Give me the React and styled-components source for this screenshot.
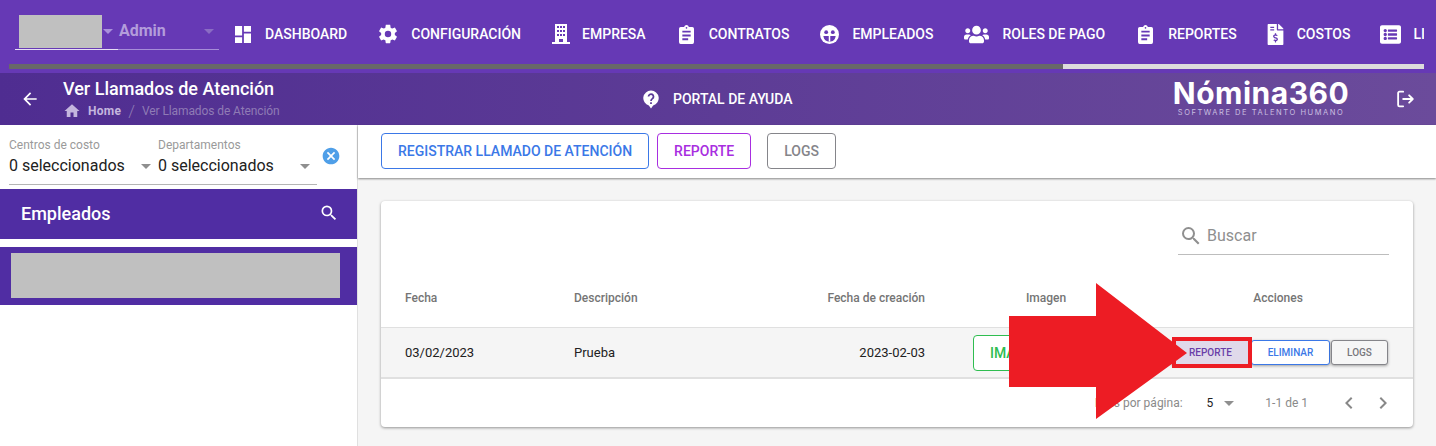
import React from "react";
import styled, { createGlobalStyle } from "styled-components";
import {
  MdArrowBack,
  MdHome,
  MdSearch,
  MdCancel,
  MdChevronLeft,
  MdChevronRight,
} from "react-icons/md";
import { FaUsers, FaFileInvoiceDollar, FaListAlt } from "react-icons/fa";

const DashboardIcon = () => (
  <svg viewBox="3 3 18 18" width="16" height="17" preserveAspectRatio="none" fill="#fff">
    <path d="M13 3V9H21V3M13 21H21V11H13M3 21H11V15H3M3 13H11V3H3V13Z" />
  </svg>
);

const CogIcon = () => (
  <svg viewBox="0 0 24 24" width="22" height="22" fill="#fff">
    <path d="M12 15.5A3.5 3.5 0 1 1 12 8.5A3.5 3.5 0 0 1 12 15.5M19.43 12.97C19.47 12.65 19.5 12.33 19.5 12C19.5 11.67 19.47 11.34 19.43 11L21.54 9.37C21.73 9.22 21.78 8.95 21.66 8.73L19.66 5.27C19.54 5.05 19.27 4.96 19.05 5.05L16.56 6.05C16.04 5.66 15.5 5.32 14.87 5.07L14.5 2.42C14.46 2.18 14.25 2 14 2H10C9.75 2 9.54 2.18 9.5 2.42L9.13 5.07C8.5 5.32 7.96 5.66 7.44 6.05L4.95 5.05C4.73 4.96 4.46 5.05 4.34 5.27L2.34 8.73C2.21 8.95 2.27 9.22 2.46 9.37L4.57 11C4.53 11.34 4.5 11.67 4.5 12C4.5 12.33 4.53 12.65 4.57 12.97L2.46 14.63C2.27 14.78 2.21 15.05 2.34 15.27L4.34 18.73C4.46 18.95 4.73 19.03 4.95 18.95L7.44 17.94C7.96 18.34 8.5 18.68 9.13 18.93L9.5 21.58C9.54 21.82 9.75 22 10 22H14C14.25 22 14.46 21.82 14.5 21.58L14.87 18.93C15.5 18.67 16.04 18.34 16.56 17.94L19.05 18.95C19.27 19.03 19.54 18.95 19.66 18.73L21.66 15.27C21.78 15.05 21.73 14.78 21.54 14.63L19.43 12.97Z" />
  </svg>
);

const BuildingIcon = () => (
  <svg viewBox="0 0 18 20" width="18" height="20" fill="#fff">
    <path
      fillRule="evenodd"
      d="M3 0H15V18H11V15H7V18H3ZM5 2V4H7V2ZM8 2V4H10V2ZM11 2V4H13V2ZM5 6V8H7V6ZM8 6V8H10V6ZM11 6V8H13V6ZM5 10V12H7V10ZM8 10V12H10V10ZM11 10V12H13V10Z"
    />
    <path d="M0 18H18V20H0Z" />
  </svg>
);

const ClipboardIcon = () => (
  <svg viewBox="3 1 18 20" width="15" height="19" preserveAspectRatio="none" fill="#fff">
    <path d="M17 9H7V7H17M17 13H7V11H17M14 17H7V15H14M12 3A1 1 0 0 1 13 4A1 1 0 0 1 12 5A1 1 0 0 1 11 4A1 1 0 0 1 12 3M19 3H14.82C14.4 1.84 13.3 1 12 1C10.7 1 9.6 1.84 9.18 3H5A2 2 0 0 0 3 5V19A2 2 0 0 0 5 21H19A2 2 0 0 0 21 19V5A2 2 0 0 0 19 3Z" />
  </svg>
);

const FaceIcon = () => (
  <svg viewBox="0 0 20 20" width="19" height="19">
    <circle cx="10" cy="10" r="10" fill="#fff" />
    <circle cx="6.5" cy="7.5" r="2" fill="#6639b5" />
    <circle cx="13.5" cy="7.5" r="2" fill="#6639b5" />
    <path d="M3.5 11.5H16.5C16 15.5 13.5 17.5 10 17.5S4 15.5 3.5 11.5Z" fill="#6639b5" />
    <path d="M9.2 11.5H10.8V17.5H9.2Z" fill="#fff" />
  </svg>
);

const HelpBubbleIcon = () => (
  <svg viewBox="0 0 18 20" width="16" height="19">
    <path d="M9 0A8.5 8.5 0 0 0 6.6 16.7L9 20L11.4 16.7A8.5 8.5 0 0 0 9 0Z" fill="#fff" />
    <path
      d="M6.2 6.6A2.8 2.8 0 1 1 10.6 9C9.6 9.7 9 10.3 9 11.6"
      fill="none"
      stroke="#5a3a97"
      strokeWidth="2"
    />
    <path d="M8 13H10V15H8Z" fill="#5a3a97" />
  </svg>
);

const navItems = [
  { label: "Dashboard", icon: <DashboardIcon />, width: 16 },
  { label: "Configuración", icon: <CogIcon />, width: 18 },
  { label: "Empresa", icon: <BuildingIcon />, width: 15 },
  { label: "Contratos", icon: <ClipboardIcon />, width: 17 },
  { label: "Empleados", icon: <FaceIcon />, width: 17 },
  { label: "Roles de pago", icon: <FaUsers size={25} />, width: 23 },
  { label: "Reportes", icon: <ClipboardIcon />, width: 17 },
  { label: "Costos", icon: <FaFileInvoiceDollar size={21} />, width: 14 },
  { label: "Listas", icon: <FaListAlt size={21} />, width: 17 },
];

export default function App() {
  return (
    <Page>
      <GlobalStyle />
      <TopBar>
        <TopRow>
          <RoleSelect>
            <RoleValue>
              <Redacted />
              <Caret $color="#a98fdc" />
              <RoleName>Admin</RoleName>
              <Caret $color="#8a6cc4" $push />
            </RoleValue>
            <RoleLine />
          </RoleSelect>
          <Nav>
            {navItems.map((item) => (
              <NavItem key={item.label}>
                <NavIcon $width={item.width}>{item.icon}</NavIcon>
                {item.label}
              </NavItem>
            ))}
          </Nav>
        </TopRow>
        <ScrollTrack>
          <ScrollThumb />
        </ScrollTrack>
      </TopBar>

      <SubHeader>
        <BackIcon>
          <MdArrowBack size={20} />
        </BackIcon>
        <TitleBlock>
          <Title>Ver Llamados de Atención</Title>
          <Crumbs>
            <MdHome size={18} />
            <CrumbHome>Home</CrumbHome>
            <CrumbSep>/</CrumbSep>
            <span>Ver Llamados de Atención</span>
          </Crumbs>
        </TitleBlock>
        <HelpLink>
          <HelpBubbleIcon />
          Portal de ayuda
        </HelpLink>
        <Logo>
          <LogoName>Nómina360</LogoName>
          <LogoTag>Software de talento humano</LogoTag>
        </Logo>
        <LogoutIcon viewBox="0 0 24 24" width="22" height="22">
          <path
            d="M10 4H6a1.5 1.5 0 0 0-1.5 1.5v13A1.5 1.5 0 0 0 6 20h4M10 12h10M16.5 8l4 4-4 4"
            fill="none"
            stroke="#fff"
            strokeWidth="2"
            strokeLinecap="round"
            strokeLinejoin="round"
          />
        </LogoutIcon>
      </SubHeader>

      <Body>
        <Sidebar>
          <Filters>
            <FilterGroup>
              <Filter $width={149}>
                <FilterLabel>Centros de costo</FilterLabel>
                <FilterValue>
                  0 seleccionados
                  <Caret $color="#8f8f8f" $push />
                </FilterValue>
              </Filter>
              <Filter $width={159}>
                <FilterLabel>Departamentos</FilterLabel>
                <FilterValue>
                  0 seleccionados
                  <Caret $color="#8f8f8f" $push />
                </FilterValue>
              </Filter>
            </FilterGroup>
            <ClearIcon>
              <MdCancel size={20} />
            </ClearIcon>
          </Filters>
          <SideHead>
            Empleados
            <MdSearch size={20} />
          </SideHead>
          <SideItem>
            <SideRedacted />
          </SideItem>
        </Sidebar>

        <Main>
          <Toolbar>
            <OutlineButton $color="#3b78e7">Registrar llamado de atención</OutlineButton>
            <OutlineButton $color="#a82ee0">Reporte</OutlineButton>
            <OutlineButton $color="#85858a" $gap>
              Logs
            </OutlineButton>
          </Toolbar>
          <Content>
            <Card>
              <SearchRow>
                <SearchField>
                  <MdSearch size={24} />
                  Buscar
                </SearchField>
              </SearchRow>
              <HeadRow>
                <span>Fecha</span>
                <span>Descripción</span>
                <RightCell>Fecha de creación</RightCell>
                <CenterCell>Imagen</CenterCell>
                <CenterCell>Acciones</CenterCell>
              </HeadRow>
              <DataRow>
                <span>03/02/2023</span>
                <span>Prueba</span>
                <RightCell>2023-02-03</RightCell>
                <CenterCell>
                  <ImageButton>Imagen</ImageButton>
                </CenterCell>
                <Actions>
                  <ActionButton $color="#6a3ea8" $bg="#e0d9ea" $border="#e0d9ea">
                    Reporte
                  </ActionButton>
                  <ActionButton $color="#3b78e7" $bg="#fff" $border="#3b78e7">
                    Eliminar
                  </ActionButton>
                  <ActionButton $color="#77777c" $bg="#f6f6f6" $border="#85858a" $narrow>
                    Logs
                  </ActionButton>
                </Actions>
              </DataRow>
              <Footer>
                <span>Filas por página:</span>
                <PageSize>
                  5
                  <Caret $color="#8f8f8f" />
                </PageSize>
                <PageRange>1-1 de 1</PageRange>
                <PageNav>
                  <MdChevronLeft size={24} />
                  <MdChevronRight size={24} />
                </PageNav>
              </Footer>
            </Card>
          </Content>
        </Main>
      </Body>

      <Highlight />
      <Arrow viewBox="0 0 180 136" width="180" height="136">
        <path d="M1 33H88V0L179 70L88 136V104H1Z" fill="#ed1c24" />
      </Arrow>
    </Page>
  );
}

const GlobalStyle = createGlobalStyle`
  html, body {
    margin: 0;
    padding: 0;
    background: #fff;
  }
  * {
    box-sizing: border-box;
  }
`;

const Page = styled.div`
  position: relative;
  width: 1436px;
  height: 446px;
  overflow: hidden;
  font-family: Roboto, "Liberation Sans", sans-serif;
  font-size: 14px;
  color: #212121;
`;

const TopBar = styled.div`
  height: 73px;
  background: #6639b5;
`;

const TopRow = styled.div`
  display: flex;
  height: 64px;
  padding-left: 15px;
`;

const RoleSelect = styled.div`
  width: 204px;
  padding-top: 15px;
  flex: none;
`;

const RoleValue = styled.div`
  display: flex;
  align-items: center;
  height: 33px;
  padding-left: 4px;
  padding-right: 5px;
`;

const Redacted = styled.div`
  width: 83px;
  height: 33px;
  background: #c0c0c0;
  margin-right: 1px;
`;

const RoleName = styled.span`
  margin: 0 0 2px 6px;
  font-size: 16px;
  font-weight: 700;
  color: #b39ddb;
`;

const RoleLine = styled.div`
  height: 1px;
  margin-top: 1px;
  background: linear-gradient(90deg, #e6def5 0 103px, #a68dd8 103px);
`;

const Caret = styled.i`
  display: block;
  flex: none;
  width: 0;
  height: 0;
  border-left: 5px solid transparent;
  border-right: 5px solid transparent;
  border-top: 5px solid ${(p) => p.$color};
  margin-left: ${(p) => (p.$push ? "auto" : "0")};
`;

const Nav = styled.nav`
  display: flex;
  flex: 1;
  min-width: 0;
  align-items: center;
  margin-right: 12px;
  padding-top: 4px;
  overflow: hidden;
`;

const NavItem = styled.div`
  display: flex;
  align-items: center;
  flex: none;
  gap: 14px;
  padding: 0 16px;
  color: #fff;
  font-weight: 500;
  text-transform: uppercase;
  white-space: nowrap;
`;

const NavIcon = styled.span`
  display: flex;
  justify-content: center;
  width: ${(p) => p.$width}px;
  svg {
    flex: none;
  }
`;

const ScrollTrack = styled.div`
  height: 5px;
  margin: 0 12px 0 9px;
  background: #dcdcdc;
`;

const ScrollThumb = styled.div`
  width: 1054px;
  height: 100%;
  background: #686868;
`;

const SubHeader = styled.header`
  display: flex;
  align-items: center;
  height: 52px;
  background: linear-gradient(90deg, #4f2d91, #6b4b9b);
  color: #fff;
`;

const BackIcon = styled.span`
  display: flex;
  flex: none;
  width: 63px;
  padding-left: 20px;
`;

const TitleBlock = styled.div`
  flex: none;
  width: 580px;
`;

const Title = styled.div`
  font-size: 18px;
  font-weight: 500;
  line-height: 22px;
`;

const Crumbs = styled.div`
  display: flex;
  align-items: center;
  height: 18px;
  font-size: 12px;
  letter-spacing: -0.1px;
  color: #8f7bb5;
  margin-top: 2px;
  svg {
    color: #c4b6de;
    margin-right: 7px;
  }
`;

const CrumbHome = styled.span`
  color: #c4b6de;
  font-weight: 700;
  letter-spacing: 0.3px;
`;

const CrumbSep = styled.span`
  margin: 0 7px;
  font-size: 17px;
  font-weight: 300;
`;

const HelpLink = styled.div`
  display: flex;
  align-items: center;
  gap: 14px;
  width: 529px;
  flex: none;
  font-weight: 500;
  text-transform: uppercase;
`;

const Logo = styled.div`
  width: 178px;
  flex: none;
  margin-bottom: 2px;
  text-align: center;
`;

const LogoName = styled.div`
  font-family: Inter, "Open Sans", sans-serif;
  font-size: 30px;
  font-weight: 700;
  line-height: 26px;
  letter-spacing: 0.5px;
  white-space: nowrap;
`;

const LogoTag = styled.div`
  margin-top: 2px;
  font-family: Inter, "Open Sans", sans-serif;
  font-size: 7.5px;
  line-height: 9px;
  letter-spacing: 1.55px;
  color: #c9bfe0;
  text-transform: uppercase;
  white-space: nowrap;
`;

const LogoutIcon = styled.svg`
  flex: none;
  margin-left: 44px;
`;

const Body = styled.div`
  display: flex;
  height: 321px;
`;

const Sidebar = styled.aside`
  width: 358px;
  flex: none;
  border-right: 1px solid #e0e0e0;
  background: #fff;
`;

const Filters = styled.div`
  display: flex;
  height: 64px;
  padding: 13px 0 0 9px;
`;

const FilterGroup = styled.div`
  display: flex;
  align-items: flex-start;
  width: 308px;
  height: 47px;
  border-bottom: 1px solid #b5b5b5;
`;

const Filter = styled.div`
  width: ${(p) => p.$width}px;
  padding-right: 7px;
`;

const FilterLabel = styled.div`
  font-size: 12px;
  line-height: 14px;
  color: #9a9a9a;
`;

const FilterValue = styled.div`
  display: flex;
  align-items: center;
  margin-top: 4px;
  font-size: 16px;
  line-height: 20px;
  color: #212121;
`;

const ClearIcon = styled.span`
  display: flex;
  margin: 8px 0 0 4px;
  color: #4f9fe8;
  align-self: flex-start;
`;

const SideHead = styled.div`
  display: flex;
  align-items: center;
  justify-content: space-between;
  height: 50px;
  padding: 0 18px 2px 21px;
  background: #502da3;
  color: #fff;
  font-size: 18px;
  font-weight: 500;
`;

const SideItem = styled.div`
  height: 58px;
  margin-top: 8px;
  padding: 6px 17px 7px 11px;
  background: #502da3;
`;

const SideRedacted = styled.div`
  height: 100%;
  background: #c0c0c0;
`;

const Main = styled.main`
  flex: 1;
  min-width: 0;
  display: flex;
  flex-direction: column;
  background: #f5f5f5;
`;

const Toolbar = styled.div`
  position: relative;
  display: flex;
  gap: 8px;
  height: 53px;
  padding: 8px 0 0 23px;
  background: #fff;
  box-shadow: 0 1px 2px rgba(0, 0, 0, 0.45);
`;

const OutlineButton = styled.button`
  height: 36px;
  padding: 0 16px;
  margin-left: ${(p) => (p.$gap ? "8px" : "0")};
  border: 1px solid ${(p) => p.$color};
  border-radius: 4px;
  background: #fff;
  color: ${(p) => p.$color};
  font-family: inherit;
  font-size: 14px;
  font-weight: 500;
  text-transform: uppercase;
`;

const Content = styled.div`
  padding: 23px 23px 0;
`;

const Card = styled.section`
  height: 226px;
  background: #fff;
  border-radius: 4px;
  box-shadow: 0 1px 3px rgba(0, 0, 0, 0.4);
`;

const SearchRow = styled.div`
  display: flex;
  justify-content: flex-end;
  height: 70px;
  padding: 20px 24px 0 0;
`;

const SearchField = styled.div`
  display: flex;
  align-items: center;
  gap: 4px;
  width: 211px;
  height: 34px;
  padding: 0 0 4px 1px;
  border-bottom: 1px solid #bdbdbd;
  font-size: 16px;
  color: #8f8f8f;
  svg {
    color: #8f8f8f;
  }
`;

const columns = "169px 100px 251px 242px 222px";

const HeadRow = styled.div`
  display: grid;
  grid-template-columns: ${columns};
  align-items: center;
  height: 57px;
  padding: 0 24px 2px;
  font-size: 12px;
  font-weight: 500;
  color: #757575;
  border-bottom: 1px solid #e0e0e0;
`;

const DataRow = styled.div`
  display: grid;
  grid-template-columns: ${columns};
  align-items: center;
  height: 51px;
  padding: 0 24px;
  background: #f5f5f5;
  font-size: 13px;
  border-bottom: 2px solid #e0e0e0;
`;

const RightCell = styled.span`
  text-align: right;
`;

const CenterCell = styled.div`
  text-align: center;
`;

const ImageButton = styled.button`
  width: 146px;
  height: 36px;
  padding: 0 0 0 16px;
  border: 1px solid #2fbd50;
  border-radius: 4px;
  background: #fff;
  color: #2fbd50;
  font-family: inherit;
  font-size: 14px;
  font-weight: 500;
  text-align: left;
  text-transform: uppercase;
`;

const Actions = styled.div`
  display: flex;
  justify-content: flex-end;
  align-items: center;
  gap: 1px;
  margin-right: 1px;
`;

const ActionButton = styled.button`
  width: ${(p) => (p.$narrow ? "57px" : "79px")};
  height: 25px;
  padding: 0;
  border: 1px solid ${(p) => p.$border};
  border-radius: 3px;
  background: ${(p) => p.$bg};
  color: ${(p) => p.$color};
  box-shadow: 0 1px 3px rgba(0, 0, 0, 0.35);
  font-family: inherit;
  font-size: 10px;
  font-weight: 500;
  text-transform: uppercase;
`;

const Footer = styled.div`
  display: flex;
  align-items: center;
  justify-content: flex-end;
  height: 46px;
  padding: 2px 18px 0 0;
  font-size: 12px;
  color: #8a8a8a;
`;

const PageSize = styled.div`
  display: flex;
  align-items: center;
  gap: 11px;
  margin-left: 24px;
  color: #212121;
`;

const PageRange = styled.span`
  margin-left: 31px;
`;

const PageNav = styled.div`
  display: flex;
  gap: 10px;
  margin-left: 29px;
  color: #888;
`;

const Highlight = styled.div`
  position: absolute;
  left: 1172px;
  top: 337px;
  width: 80px;
  height: 31px;
  border: 4px solid #ed1c24;
`;

const Arrow = styled.svg`
  position: absolute;
  left: 1008px;
  top: 283px;
`;
